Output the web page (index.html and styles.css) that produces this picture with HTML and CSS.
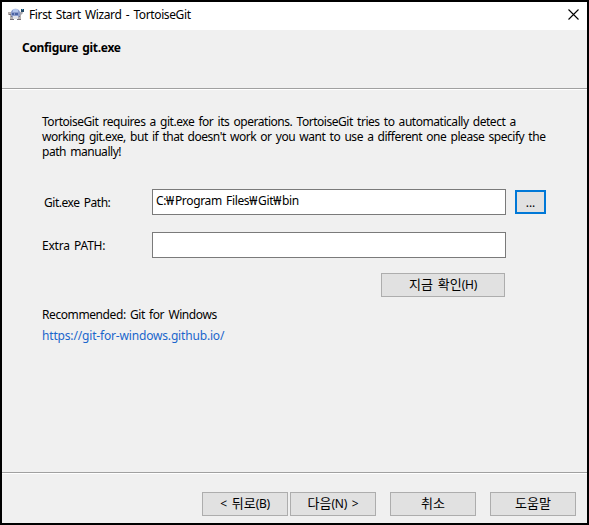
FILE: index.html
```html
<!DOCTYPE html>
<html lang="ko">
<head>
<meta charset="utf-8">
<title>First Start Wizard - TortoiseGit</title>
<link rel="stylesheet" href="styles.css">
</head>
<body>
<div class="window">
  <header class="titlebar">
    <svg class="logo" width="17" height="14" viewBox="0 0 17 14">
      <path d="M0 4h3v3H0zM2 7h3v5H2zM10 7h3v5h-3z" fill="#b8b2b0"/>
      <path d="M1 6h2v1H1zM2 11h4v1H2zM9 11h4v1H9zM3 8h1v1H3zM11 8h1v1h-1z" fill="#77717a"/>
      <path d="M11 5l3-2 1 2-3 3z" fill="#a8a6ac"/>
      <ellipse cx="7.5" cy="5.5" rx="4.7" ry="4.8" fill="#8d9ccb"/>
      <path d="M5 1h5v3H5z" fill="#b4c6ec"/>
      <path d="M4 5h2v2H4zM7 5h3v2H7z" fill="#4c63a4"/>
      <path d="M5 8h5v3H5z" fill="#e2e2e8"/>
      <path d="M13 1h3v3h-3z" fill="#244a68"/>
      <path d="M14 1h1v1h-1z" fill="#45a5c8"/>
    </svg>
    <h1 class="caption">First Start Wizard - TortoiseGit</h1>
    <svg class="close" width="11" height="11" viewBox="0 0 11 11"><path d="M.5.5l10 10M10.5.5l-10 10" stroke="#000" stroke-width="1.1" fill="none"/></svg>
  </header>
  <section class="heading"><h2 class="page-title">Configure git.exe</h2></section>
  <main class="content">
    <p class="intro">TortoiseGit requires a git.exe for its operations. TortoiseGit tries to automatically detect a<br>working git.exe, but if that doesn't work or you want to use a different one please specify the<br>path manually!</p>
    <div class="row">
      <span class="label label-git">Git.exe Path:</span>
      <div class="field"><span class="path">C:<span class="won">₩</span>Program Files<span class="won">₩</span>Git<span class="won">₩</span>bin</span></div>
      <div class="button browse">...</div>
    </div>
    <div class="row">
      <span class="label label-extra">Extra PATH:</span>
      <div class="field"></div>
    </div>
    <div class="button check"><span>지금 확인<i>(H)</i></span></div>
    <p class="recommended">Recommended: Git for Windows</p>
    <a class="link">https://git-for-windows.github.io/</a>
  </main>
  <footer class="footer">
    <div class="button nav"><span><i>&lt;</i> 뒤로<i>(B)</i></span></div>
    <div class="button nav next"><span>다음<i>(N)</i> <i>&gt;</i></span></div>
    <div class="button nav cancel"><span>취소</span></div>
    <div class="button nav help"><span>도움말</span></div>
  </footer>
</div>
</body>
</html>
```
FILE: styles.css
```css
* { box-sizing: border-box; }
body {
  margin: 0;
  font: 12px/15px "Noto Sans", "Noto Sans CJK KR", sans-serif;
  letter-spacing: -0.46px;
  word-spacing: 1.5px;
  color: #000;
}
h1, h2, p { margin: 0; font-size: inherit; font-weight: normal; }
.window {
  width: 589px;
  height: 525px;
  border: 2px solid #000;
  background: #f0f0f0;
  display: flex;
  flex-direction: column;
  white-space: nowrap;
}
.titlebar {
  height: 28px;
  background: #fff;
  display: flex;
  padding: 5px 8px 0 6px;
}
.logo { margin-top: 1px; }
.caption { margin-left: 4px; letter-spacing: -0.38px; }
.close { margin: 2px 0 0 auto; }
.heading {
  height: 59px;
  padding: 10px 20px;
  border-bottom: 1px solid #a0a0a0;
  box-shadow: 0 1px #fff;
}
.page-title { font-weight: bold; letter-spacing: -0.32px; }
.content {
  flex: 1;
  padding: 25px 40px 0;
  display: flex;
  flex-direction: column;
  align-items: flex-start;
}
.intro { margin-bottom: 30px; }
.row { display: flex; height: 26px; margin-bottom: 17px; }
.label { width: 110px; padding-top: 6px; }
.label-git { padding-left: 2px; }
.label-extra { letter-spacing: -0.22px; }
.field {
  width: 354px;
  background: #fff;
  border: 1px solid #7a7a7a;
  padding: 3px;
}
.path { letter-spacing: -0.35px; }
.won { letter-spacing: 0.8px; }
.button {
  height: 24px;
  border: 1px solid #adadad;
  background: #e1e1e1;
  display: flex;
  justify-content: center;
  align-items: center;
  padding-bottom: 2px;
  font-size: 13px;
  letter-spacing: 0;
}
.button i { font-size: 12px; font-style: normal; letter-spacing: -0.3px; }
.browse {
  width: 31px;
  margin: 1px 0 0 9px;
  padding: 0;
  border: 2px solid #0078d7;
  font-size: 12px;
}
.check { width: 124px; margin: -2px 0 10px 339px; }
.recommended { margin-bottom: 6px; letter-spacing: -0.41px; }
.link { color: #1a66cc; letter-spacing: -0.17px; }
.footer {
  height: 51px;
  border-top: 1px solid #a0a0a0;
  box-shadow: inset 0 1px #fff;
  display: flex;
  padding: 19px 0 0 200px;
}
.nav { width: 86px; }
.next { margin-left: 2px; }
.cancel, .help { margin-left: 14px; }
```
